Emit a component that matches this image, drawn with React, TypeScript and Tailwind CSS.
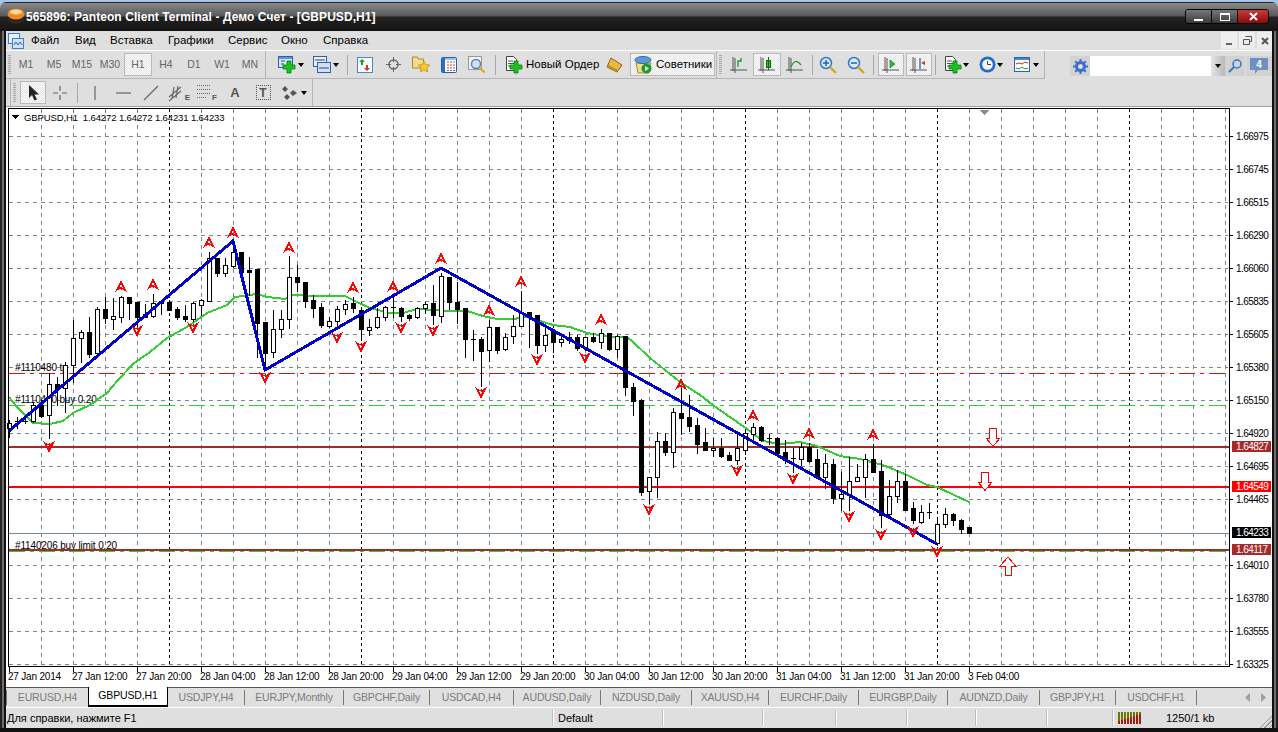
import React from 'react';

// [high, low, bodyTop, bodyBottom, bull] in page pixels, one bar every 8px from x=9
const bars: [number, number, number, number, number][] = [
  [420,437,423,428,1],[417,428,421,422,0],[415,423,421,421,0],[402,422,405,421,1],[402,417,405,416,0],[373,438,384,415,1],
  [377,405,384,389,0],[362,412,365,388,1],[320,382,338,365,1],[330,362,332,338,1],[317,357,332,354,0],[307,357,309,353,1],
  [297,323,309,318,0],[298,329,316,319,1],[296,322,297,317,1],[297,319,297,303,0],[302,327,302,317,0],[304,317,314,317,0],
  [294,317,303,316,1],[300,314,301,303,1],[300,310,302,310,0],[307,319,309,317,0],[305,321,316,319,0],[302,321,303,319,1],
  [299,315,300,305,1],[252,301,258,301,1],[258,276,258,273,0],[258,276,265,273,1],[241,267,252,266,1],[252,277,252,272,0],
  [257,295,270,272,0],[269,357,269,323,0],[322,370,322,353,0],[310,357,329,352,1],[310,337,319,329,1],[256,328,277,319,1],
  [265,291,277,282,0],[282,307,282,301,0],[295,317,300,308,0],[303,327,307,325,0],[317,327,321,326,1],[306,327,309,321,1],
  [300,314,304,309,1],[297,312,303,308,0],[307,340,310,329,0],[319,335,327,330,1],[308,328,317,327,1],[306,320,307,317,1],
  [295,317,307,308,0],[307,321,308,316,0],[314,320,315,318,0],[307,318,308,317,1],[302,313,304,308,1],[285,324,303,315,0],
  [273,322,276,316,1],[277,309,277,302,0],[282,323,302,309,0],[308,357,308,339,0],[330,360,339,340,0],[337,386,339,351,0],
  [320,361,327,350,1],[327,353,327,350,0],[333,350,337,349,1],[315,343,326,336,1],[291,326,312,326,1],[312,347,312,316,0],
  [315,353,315,345,0],[328,351,335,345,1],[330,352,330,342,0],[335,346,339,342,1],[332,343,337,340,1],[335,350,337,348,0],
  [337,350,337,348,1],[333,342,337,341,0],[329,348,333,342,1],[333,350,333,349,0],[335,357,336,349,1],[336,395,336,387,0],
  [383,415,387,401,0],[399,495,400,492,0],[477,503,477,491,1],[432,497,441,477,1],[433,455,441,452,0],[408,467,412,452,1],
  [385,434,413,418,0],[395,431,417,426,0],[418,453,425,444,0],[428,450,442,450,0],[438,456,448,450,1],[438,457,448,456,0],
  [452,460,455,460,0],[435,464,448,460,1],[430,454,433,450,1],[423,440,427,434,1],[426,441,427,440,0],[434,444,438,439,0],
  [437,453,438,453,0],[440,463,452,460,0],[448,472,458,459,0],[443,465,447,459,1],[443,462,447,461,0],[449,478,459,477,0],
  [454,488,463,477,1],[459,503,464,498,0],[472,510,494,498,1],[457,510,481,495,1],[464,481,477,481,1],[454,497,459,477,1],
  [444,472,459,472,0],[460,527,471,515,0],[480,515,496,514,1],[470,502,481,496,1],[474,510,481,510,0],[502,523,508,520,0],
  [505,523,512,522,1],[503,518,512,513,0],[517,545,524,543,1],[508,527,514,524,1],[513,525,514,520,0],[519,533,520,529,0],
  [527,533,527,533,0],
];

const ma = '9,397 17,407 25,415 33,423 50,424 63,421 73,413 90,405 107,393 118,380 133,364 150,352 167,338 187,327 207,313 227,305 235,297 257,294 267,297 285,299 292,295 320,296 345,296 357,302 370,308 390,313 403,313 417,309 453,311 467,311 483,316 497,319 513,319 527,317 553,325 570,327 587,333 610,337 627,337 633,342 650,358 680,382 700,395 717,408 747,429 763,441 780,444 800,442 817,446 840,456 860,459 883,465 907,475 927,485 937,487 969,502';

const upMarks = [[121,286],[153,284],[209,242],[233,232],[289,247],[353,287],[393,286],[441,258],[489,310],[521,281],[601,319],[681,384],[753,415],[809,433],[873,434]];
const downMarks = [[49,447],[137,331],[193,328],[265,378],[337,338],[361,347],[401,328],[433,331],[481,393],[537,360],[585,358],[649,510],[737,471],[793,479],[849,517],[881,535],[913,532],[937,552]];

const prices = [
  ['1.66975',136],['1.66745',169],['1.66515',202],['1.66290',235],['1.66060',268],['1.65835',301],['1.65605',334],['1.65380',367],
  ['1.65150',400],['1.64920',433],['1.64695',466],['1.64465',499],['1.64010',565],['1.63780',598],['1.63555',631],['1.63325',664],
] as [string, number][];

const times = ['27 Jan 2014','27 Jan 12:00','27 Jan 20:00','28 Jan 04:00','28 Jan 12:00','28 Jan 20:00','29 Jan 04:00','29 Jan 12:00','29 Jan 20:00','30 Jan 04:00','30 Jan 12:00','30 Jan 20:00','31 Jan 04:00','31 Jan 12:00','31 Jan 20:00','3 Feb 04:00'];

const priceTags = [['1.64827',447,'#a52a2a'],['1.64549',487,'#ff0000'],['1.64233',533,'#000000'],['1.64117',550,'#a52a2a']] as [string, number, string][];

const chartFont = '"Liberation Sans", Arial, sans-serif';

function Chart() {
  const vertical: number[] = [];
  for (let x = 41; x <= 1225; x += 32) vertical.push(x);
  return (
    <svg width={1266} height={579} viewBox="6 107 1266 579" className="block shrink-0" fontFamily={chartFont} shapeRendering="crispEdges">
      <rect x={6} y={107} width={1266} height={579} fill="#fff" />
      {vertical.map(x => {
        const major = (x - 169) % 192 === 0;
        return <line key={x} x1={x + 0.5} x2={x + 0.5} y1={109} y2={666} stroke={major ? '#000' : '#778899'} strokeDasharray={major ? '3 3' : '4 4'} />;
      })}
      {prices.map(([, y]) => (
        <line key={y} x1={9} x2={1228} y1={y + 0.5} y2={y + 0.5} stroke="#778899" strokeDasharray="4 4" />
      ))}
      <line x1={9} x2={1229} y1={533.5} y2={533.5} stroke="#778899" />
      <line x1={9} x2={1229} y1={373.5} y2={373.5} stroke="#e01010" strokeDasharray="16 5 4 5" />
      <line x1={9} x2={1229} y1={405.5} y2={405.5} stroke="#32cd32" strokeDasharray="16 5 4 5" />
      <line x1={9} x2={1229} y1={551.5} y2={551.5} stroke="#32cd32" strokeDasharray="16 5 4 5" />

      <text x={15} y={371} fontSize={10} letterSpacing={-0.15} fill="#000">#1110480 tp</text>
      <text x={15} y={403} fontSize={10} letterSpacing={-0.15} fill="#000">#1110410 buy 0.20</text>
      <text x={15} y={549} fontSize={10} letterSpacing={-0.15} fill="#000">#1140206 buy limit 0.20</text>

      <rect x={9} y={446} width={1220} height={2} fill="#a52a2a" />
      <rect x={9} y={486} width={1220} height={2} fill="#ff0000" />
      <rect x={9} y={549} width={1220} height={2} fill="#a52a2a" />

      <polyline points={ma} fill="none" stroke="#32cd32" strokeWidth={2} />
      {bars.map(([hi, lo, top, bottom, bull], i) => {
        const x = 9 + i * 8;
        return (
          <g key={x}>
            <line x1={x + 0.5} x2={x + 0.5} y1={hi} y2={lo + 1} stroke="#000" />
            {bottom - top < 2 ? (
              <rect x={x - 2} y={top} width={5} height={Math.max(bottom - top, 1)} fill="#000" />
            ) : (
              <rect x={x - 1.5} y={top + 0.5} width={4} height={bottom - top} fill={bull ? '#fff' : '#000'} stroke="#000" />
            )}
          </g>
        );
      })}
      <polyline points="9,431 233,241 265,370 441,268 937,544" fill="none" stroke="#0000cd" strokeWidth={3} />

      {upMarks.map(([x, y]) => (
        <path key={x} d={`M${x - 6} ${y + 6}L${x} ${y - 6}L${x + 6} ${y + 6}L${x + 1} ${y + 3}L${x} ${y + 4}L${x - 1} ${y + 3}ZM${x - 1} ${y + 1}L${x} ${y - 2}L${x + 2} ${y + 2}Z`} fill="#ff0000" fillRule="evenodd" />
      ))}
      {downMarks.map(([x, y]) => (
        <path key={x} d={`M${x - 6} ${y - 6}L${x} ${y + 6}L${x + 6} ${y - 6}L${x + 1} ${y - 3}L${x} ${y - 4}L${x - 1} ${y - 3}ZM${x - 2} ${y - 2}L${x} ${y + 2}L${x + 1} ${y - 1}Z`} fill="#ff0000" fillRule="evenodd" />
      ))}

      <path d="M989.5 428.5h7v9.5h3.5l-7 8.5-7-8.5h3.5z" fill="#fff" stroke="#ff0000" />
      <path d="M981.5 472.5h7v9.5h3.5l-7 8.5-7-8.5h3.5z" fill="#fff" stroke="#ff0000" />
      <path d="M1005 575.5h6.5v-9.5h4l-7.5-9-8 9h5z" fill="#fff" stroke="#ff0000" />

      <path d="M979 110h10l-5 5z" fill="#8a8a8a" />
      <path d="M12 115h7l-3.5 4z" fill="#000" />
      <text x={24} y={121} fontSize={9.5} letterSpacing={-0.12} fill="#000">GBPUSD,H1&#160; 1.64272 1.64272 1.64231 1.64233</text>

      {/* plot frame */}
      <rect x={8.5} y={108.5} width={1221} height={558} fill="none" stroke="#000" />

      {/* price scale */}
      {prices.map(([label, y]) => (
        <g key={label}>
          <line x1={1229} x2={1233} y1={y + 0.5} y2={y + 0.5} stroke="#000" />
          <text x={1236} y={y + 4} fontSize={10} letterSpacing={-0.55} fill="#000">{label}</text>
        </g>
      ))}
      {priceTags.map(([label, y, color]) => (
        <g key={label}>
          <rect x={1232} y={y - 6} width={39} height={11} fill={color} />
          <text x={1236} y={y + 3} fontSize={10} letterSpacing={-0.55} fill="#fff">{label}</text>
        </g>
      ))}

      {/* time scale */}
      {times.map((t, i) => (
        <g key={t}>
          <line x1={9.5 + i * 64} x2={9.5 + i * 64} y1={666} y2={672} stroke="#000" />
          <text x={8 + i * 64} y={680} fontSize={10} letterSpacing={-0.2} fill="#000">{t}</text>
        </g>
      ))}
    </svg>
  );
}

const Dither = 'border border-[#b9b9b9] bg-[repeating-conic-gradient(#ffffff_0_25%,#e2e2e2_0_50%)] bg-[length:2px_2px]';

function Caret({ className = '' }: { className?: string }) {
  return (
    <svg width={6} height={4} viewBox="0 0 6 4" className={`shrink-0 ${className}`}>
      <path d="M0 0h6L3 4z" fill="#000" />
    </svg>
  );
}

function Grip() {
  return <div className="h-[20px] w-[3px] shrink-0 bg-[repeating-linear-gradient(180deg,#a8a8a8_0_1px,transparent_1px_2px)]" />;
}

function Sep({ className = '' }: { className?: string }) {
  return <div className={`mx-[3px] h-[20px] w-px shrink-0 bg-[#a8a8a8] ${className}`} />;
}

function Btn({ children, active, w = 'w-[28px]' }: { children: React.ReactNode; active?: boolean; w?: string }) {
  return (
    <div className={`flex h-[23px] shrink-0 items-center justify-center ${w} ${active ? Dither : ''}`}>
      {children}
    </div>
  );
}

const GreenPlus = ({ x, y }: { x: number; y: number }) => (
  <path d={`M${x + 4} ${y}h4v4h4v4h-4v4h-4v-4h-4v-4h4z`} fill="#19c21f" stroke="#0b7d10" strokeWidth={0.8} />
);

const AxisBars = ({ children }: { children?: React.ReactNode }) => (
  <svg width={18} height={18} viewBox="0 0 18 18" fill="none">
    <path d="M3 1v14M0 14h17M5 2v15" stroke="#555" />
    {children}
  </svg>
);

function ChartPlusIcon() {
  return (
    <svg width={18} height={18} viewBox="0 0 18 18" className="shrink-0">
      <rect x={0.5} y={0.5} width={14} height={11} fill="#d8e8fa" stroke="#2a63b0" />
      <rect x={1} y={1} width={13} height={2} fill="#5c93d8" />
      <path d="M3 5h4M3 8h3" stroke="#444" />
      <GreenPlus x={5} y={5} />
    </svg>
  );
}

function ProfilesIcon() {
  return (
    <svg width={18} height={18} viewBox="0 0 18 18" className="shrink-0">
      <rect x={0.5} y={0.5} width={13} height={10} fill="#e6effa" stroke="#2a63b0" />
      <rect x={4.5} y={6.5} width={13} height={10} fill="#cfe0f6" stroke="#2a63b0" />
      <path d="M2 4h10M6 12h10" stroke="#444" />
    </svg>
  );
}

function MarketIcon() {
  return (
    <svg width={16} height={16} viewBox="0 0 16 16">
      <rect x={0.5} y={0.5} width={15} height={15} fill="#fbfdff" stroke="#4a85cc" />
      <path d="M5 2l3 3H6v3H4V5H2z" fill="#1a9a1f" />
      <path d="M10 14l3-3h-2V8H9v3H7z" fill="#d8321f" />
    </svg>
  );
}

function CrosshairIcon() {
  return (
    <svg width={15} height={15} viewBox="0 0 15 15" fill="none" stroke="#666">
      <circle cx={7.5} cy={7.5} r={4.5} strokeWidth={1.4} />
      <path d="M7.5 0v5M7.5 10v5M0 7.5h5M10 7.5h5" />
    </svg>
  );
}

function FavoriteIcon() {
  return (
    <svg width={18} height={17} viewBox="0 0 18 17">
      <path d="M0.5 1h5l1 2h5v9h-11z" fill="#f6dc8c" stroke="#a98b2c" />
      <path d="M12 5l1.8 3.6 4 .5-2.9 2.7.8 4L12 14l-3.6 1.8.7-4-2.9-2.7 4-.5z" fill="#f7c92e" stroke="#b98a0c" strokeWidth={0.7} />
    </svg>
  );
}

function NavigatorIcon() {
  return (
    <svg width={16} height={16} viewBox="0 0 16 16">
      <rect x={0.5} y={0.5} width={15} height={15} rx={1} fill="#fff" stroke="#1f5fb0" />
      <rect x={1} y={1} width={3} height={14} fill="#2a72c8" />
      <rect x={4} y={1} width={11} height={2} fill="#9cc0ec" />
      <path d="M6 5h8M6 8h8M6 11h8M6 13.5h8" stroke="#c04a3a" strokeDasharray="2 1" />
    </svg>
  );
}

function TesterIcon() {
  return (
    <svg width={18} height={18} viewBox="0 0 18 18" fill="none">
      <rect x={0.5} y={0.5} width={13} height={13} fill="#eef3fa" stroke="#999" />
      <circle cx={8} cy={8} r={4.5} fill="#cfe2f7" stroke="#5a7ea8" strokeWidth={1.4} />
      <path d="M11.5 11.5l5 5" stroke="#d9a520" strokeWidth={2} />
    </svg>
  );
}

function NewOrderIcon() {
  return (
    <svg width={18} height={18} viewBox="0 0 18 18" className="shrink-0">
      <path d="M1.5 .5h7l3 3v11h-10z" fill="#fff" stroke="#444" />
      <path d="M3 5h5M3 7.5h6M3 10h4" stroke="#555" />
      <GreenPlus x={5} y={5} />
    </svg>
  );
}

function GoldIcon() {
  return (
    <svg width={17} height={16} viewBox="0 0 17 16" className="shrink-0">
      <path d="M5 1l11 7-5 7-10-5z" fill="#e8b94a" stroke="#8a6414" />
      <path d="M1 10l10 5 1-2-10-5z" fill="#b88a26" />
    </svg>
  );
}

function ExpertIcon() {
  return (
    <svg width={19} height={20} viewBox="0 0 19 20" className="shrink-0">
      <path d="M2 8l15 0-2 10H4z" fill="#f3dc8a" stroke="#a98b2c" />
      <ellipse cx={9} cy={5} rx={8} ry={3.5} fill="#5d9ad8" stroke="#2d6aa8" />
      <circle cx={12.5} cy={13.5} r={5} fill="#1f9a2f" />
      <path d="M11 11l4 2.5-4 2.5z" fill="#fff" />
    </svg>
  );
}

const ZoomIcon = ({ plus }: { plus?: boolean }) => (
  <svg width={18} height={18} viewBox="0 0 18 18" fill="none">
    <circle cx={7} cy={7} r={5.5} fill="#d7e9fb" stroke="#2f77c9" strokeWidth={1.5} />
    <path d="M4 7h6" stroke="#1f5fb0" strokeWidth={1.5} />
    {plus && <path d="M7 4v6" stroke="#1f5fb0" strokeWidth={1.5} />}
    <path d="M11 11l6 6" stroke="#d9a520" strokeWidth={2.4} />
  </svg>
);

function ClockIcon() {
  return (
    <svg width={17} height={17} viewBox="0 0 17 17" className="shrink-0">
      <circle cx={8.5} cy={8.5} r={8} fill="#1f6fc9" />
      <circle cx={8.5} cy={8.5} r={5.3} fill="#f4f8fd" />
      <path d="M8.5 5v3.5H12" fill="none" stroke="#444" />
    </svg>
  );
}

function TemplateIcon() {
  return (
    <svg width={16} height={15} viewBox="0 0 16 15" className="shrink-0">
      <rect x={0.5} y={0.5} width={15} height={14} fill="#fff" stroke="#2a63b0" />
      <rect x={1} y={1} width={14} height={2} fill="#4a85cc" />
      <path d="M2 7l3-1 3 1 3-2 3 1" fill="none" stroke="#c0392b" />
      <path d="M2 11l3 1 3-2 3 2 3-1" fill="none" stroke="#2a9a2f" />
    </svg>
  );
}

function GearIcon() {
  return (
    <svg width={15} height={15} viewBox="0 0 15 15" fill="none">
      <circle cx={7.5} cy={7.5} r={4} stroke="#3a6fd0" strokeWidth={3} />
      <path d="M7.5 0v15M0 7.5h15M2.2 2.2l10.6 10.6M12.8 2.2L2.2 12.8" stroke="#3a6fd0" strokeWidth={2} strokeDasharray="3 9 3 0" />
      <circle cx={7.5} cy={7.5} r={1.5} fill="#dfe9f8" />
    </svg>
  );
}

const Stroke = ({ d }: { d: string }) => (
  <svg width={20} height={20} viewBox="0 0 20 20" fill="none">
    <path d={d} stroke="#666" strokeWidth={1.2} />
  </svg>
);

const timeframes = ['M1', 'M5', 'M15', 'M30', 'H1', 'H4', 'D1', 'W1', 'MN'];

const tabs: [string, string][] = [
  ['EURUSD,H4', 'w-[82px]'], ['GBPUSD,H1', 'w-[80px]'], ['USDJPY,H4', 'w-[77px]'], ['EURJPY,Monthly', 'w-[99px]'],
  ['GBPCHF,Daily', 'w-[86px]'], ['USDCAD,H4', 'w-[84px]'], ['AUDUSD,Daily', 'w-[87px]'], ['NZDUSD,Daily', 'w-[91px]'],
  ['XAUUSD,H4', 'w-[77px]'], ['EURCHF,Daily', 'w-[90px]'], ['EURGBP,Daily', 'w-[89px]'], ['AUDNZD,Daily', 'w-[92px]'],
  ['GBPJPY,H1', 'w-[76px]'], ['USDCHF,H1', 'w-[81px]'],
];

const statusCells = ['w-[110px]', 'w-[100px]', 'w-[73px]', 'w-[71px]', 'w-[69px]', 'w-[71px]', 'w-[66px]'];

const signalBars = [0, 1, 2, 3, 4, 5, 6, 7];

export default function App() {
  return (
    <div className="flex h-[732px] w-[1278px] flex-col overflow-hidden bg-[#a9c3e6] font-['Liberation_Sans',Arial,sans-serif] text-[11px] text-black">
      {/* title bar */}
      <div className="mt-[2px] flex h-[29px] shrink-0 items-center rounded-t-[6px] bg-[linear-gradient(180deg,#222_0,#222_1px,#8a8a8a_1px,#585858_14px,#222_15px,#151515_100%)] pl-[7px] pr-[9px]">
        <svg width={18} height={18} viewBox="0 0 18 18" className="shrink-0">
          <ellipse cx={9} cy={6} rx={8.5} ry={5.5} fill="#f08a24" />
          <ellipse cx={9} cy={4} rx={6} ry={2.5} fill="#fbd79a" />
          <path d="M1 9c2 6 14 6 16 0v3c-2 5-14 5-16 0z" fill="#3a2a10" />
        </svg>
        <span className="ml-[1px] text-[12px] font-bold tracking-[0.07px] text-white">565896: Panteon Client Terminal - Демо Счет - [GBPUSD,H1]</span>
        <div className="ml-auto flex h-[15px] overflow-hidden rounded-[3px] border border-black">
          <div className="flex w-[26px] items-end justify-center border-r border-black bg-[linear-gradient(180deg,#777,#3a3a3a)] pb-[2px]">
            <div className="h-[2px] w-[9px] bg-white" />
          </div>
          <div className="flex w-[26px] items-center justify-center border-r border-black bg-[linear-gradient(180deg,#777,#3a3a3a)]">
            <div className="h-[8px] w-[10px] border border-t-2 border-white" />
          </div>
          <div className="flex w-[30px] items-center justify-center bg-[linear-gradient(180deg,#c93a3a,#8a0c0c)]">
            <svg width={9} height={9} viewBox="0 0 9 9"><path d="M1 1l7 7M8 1l-7 7" stroke="#fff" strokeWidth={2} /></svg>
          </div>
        </div>
      </div>

      <div className="flex min-h-0 flex-1">
        <div className="w-[6px] shrink-0 bg-[linear-gradient(90deg,#222_0,#222_2px,#6e6e6e_2px,#6e6e6e_4px,#111_4px)]" />
        <div className="flex w-[1266px] flex-col bg-[#dfdfdf]">
          {/* menu */}
          <div className="flex h-[19px] shrink-0 items-center pt-[1px] text-[11.5px]">
            <svg width={16} height={16} viewBox="0 0 16 16" className="ml-[2px] shrink-0">
              <rect x={0.5} y={0.5} width={11} height={10} fill="#e8f1fb" stroke="#3f7cc9" />
              <rect x={4.5} y={5.5} width={11} height={10} fill="#cfe2f7" stroke="#3f7cc9" />
              <path d="M6 12l2-3 2 3 2-3 2 3" fill="none" stroke="#2a63b0" />
            </svg>
            <div className="ml-[7px] flex">
              <span className="w-[44px]">Файл</span>
              <span className="w-[35px]">Вид</span>
              <span className="w-[58px]">Вставка</span>
              <span className="w-[60px]">Графики</span>
              <span className="w-[53px]">Сервис</span>
              <span className="w-[42px]">Окно</span>
              <span>Справка</span>
            </div>
            <div className="ml-auto mr-[-1px] flex gap-[2px] self-start">
              <div className="flex h-[17px] w-[16px] items-end justify-center bg-[#eeeeee] pb-[4px]"><div className="h-[2px] w-[6px] bg-[#666]" /></div>
              <div className="flex h-[17px] w-[16px] items-center justify-center bg-[#eeeeee]">
                <svg width={9} height={9} viewBox="0 0 9 9" fill="none" stroke="#555"><path d="M2.5.5h6v5h-2M.5 3.5h6v5h-6z" /></svg>
              </div>
              <div className="flex h-[17px] w-[16px] items-center justify-center bg-[#eeeeee]">
                <svg width={8} height={8} viewBox="0 0 8 8"><path d="M1 1l6 6M7 1L1 7" stroke="#555" strokeWidth={2} /></svg>
              </div>
            </div>
          </div>

          {/* toolbar row 1 */}
          <div className="flex h-[29px] shrink-0 items-start border-t border-white">
            <div className="flex h-[28px] w-[260px] items-center border-b border-r border-[#b5b5b5] pl-[2px] text-[10.5px] text-[#666]">
              <Grip />
              <div className="ml-[1px] flex items-center">
                {timeframes.map(t => (
                  <Btn key={t} active={t === 'H1'}>{t}</Btn>
                ))}
              </div>
            </div>
            <div className="flex h-[28px] w-[451px] items-center border-b border-r border-[#b5b5b5] pl-[12px]">
              <ChartPlusIcon />
              <Caret className="ml-[2px]" />
              <div className="ml-[9px]"><ProfilesIcon /></div>
              <Caret className="ml-[2px]" />
              <Sep className="ml-[8px]" />
              <Btn><MarketIcon /></Btn>
              <Btn><CrosshairIcon /></Btn>
              <Btn><FavoriteIcon /></Btn>
              <Btn><NavigatorIcon /></Btn>
              <Btn><TesterIcon /></Btn>
              <Sep className="ml-[4px]" />
              <div className="ml-[6px] flex items-center">
                <NewOrderIcon />
                <span className="ml-[3px] w-[70px] whitespace-nowrap text-[11.5px]">Новый Ордер</span>
              </div>
              <div className="ml-[10px]"><GoldIcon /></div>
              <div className={`ml-[7px] flex h-[23px] w-[85px] shrink-0 items-center pl-[3px] ${Dither}`}>
                <ExpertIcon />
                <span className="ml-[3px] whitespace-nowrap text-[11.5px]">Советники</span>
              </div>
            </div>
            <div className="flex h-[28px] w-[328px] items-center border-b border-r border-[#b5b5b5] pl-[2px]">
              <Grip />
              <div className="ml-[3px] flex items-center">
                <Btn><AxisBars><path d="M8 11V5h3V2" stroke="#1a9a1f" strokeWidth={1.3} /></AxisBars></Btn>
                <Btn active><AxisBars><rect x={8.5} y={4.5} width={4} height={7} fill="#2ac02f" stroke="#0d6d12" /><path d="M10.5 1v13" stroke="#0d6d12" /></AxisBars></Btn>
                <Btn><AxisBars><path d="M5 11c3-7 6-7 10-2" stroke="#1a9a1f" strokeWidth={1.2} /></AxisBars></Btn>
                <Sep />
                <div className="-ml-[2px]"><Btn><ZoomIcon plus /></Btn></div>
                <Btn><ZoomIcon /></Btn>
                <Sep />
                <div className="ml-[1px]"><Btn active w="w-[26px]"><AxisBars><path d="M8 4l5 4-5 4z" fill="#2ac02f" stroke="#0d6d12" strokeWidth={0.6} /></AxisBars></Btn></div>
                <div className="ml-[2px]"><Btn active w="w-[26px]"><AxisBars><path d="M10 2v11" stroke="#2a63b0" strokeWidth={1.3} /><path d="M11 7l4-2v4z" fill="#c0391b" /></AxisBars></Btn></div>
                <Sep />
                <div className="ml-[5px] flex items-center">
                  <NewOrderIcon />
                  <Caret className="ml-[1px]" />
                </div>
                <div className="ml-[10px] flex items-center">
                  <ClockIcon />
                  <Caret className="ml-[1px]" />
                </div>
                <div className="ml-[11px] flex items-center">
                  <TemplateIcon />
                  <Caret className="ml-[3px]" />
                </div>
              </div>
            </div>
            {/* search */}
            <div className="ml-[25px] mt-[5px] flex h-[20px] w-[202px] items-stretch">
              <div className="flex w-[20px] items-center justify-center bg-[#d2d2d2]"><GearIcon /></div>
              <div className="w-[121px] bg-white" />
              <div className="flex w-[14px] items-center justify-center bg-[linear-gradient(90deg,#e4e4e4,#b8b8b8)]"><Caret /></div>
              <div className="flex w-[20px] items-center justify-center bg-[#d2d2d2]">
                <svg width={14} height={14} viewBox="0 0 14 14" fill="none"><circle cx={9} cy={5} r={4} stroke="#2f77c9" strokeWidth={1.5} /><path d="M6 8l-5 5" stroke="#2f77c9" strokeWidth={2} /></svg>
              </div>
              <div className="ml-px flex w-[26px] items-center justify-center bg-[#d2d2d2]">
                <svg width={20} height={18} viewBox="0 0 20 18">
                  <path d="M1 1h18v12H9l-3 4v-4H1z" fill="#6f8fc0" />
                  <text x={10} y={11} textAnchor="middle" fontSize={10} fontWeight={700} fill="#fff">4</text>
                </svg>
              </div>
            </div>
          </div>

          {/* toolbar row 2 */}
          <div className="flex h-[28px] shrink-0 items-start border-b border-[#a0a0a0] pl-[4px]">
            <div className="flex h-[27px] w-[303px] items-center border-l border-r border-[#b5b5b5] pl-[2px]">
              <Grip />
              <div className="ml-[4px] flex items-center">
                <Btn active w="w-[26px]">
                  <svg width={12} height={16} viewBox="0 0 12 16"><path d="M2 0v13l3-3 2.5 5.5 2.5-1L7.5 9.5H12z" fill="#222" /></svg>
                </Btn>
                <Btn><Stroke d="M10 3v5M10 12v5M3 10h5M12 10h5" /></Btn>
                <Sep />
                <Btn><Stroke d="M10 3v14" /></Btn>
                <Btn><Stroke d="M3 10h15" /></Btn>
                <Btn><Stroke d="M3 17L17 3" /></Btn>
                <Btn>
                  <div className="relative h-[20px] w-[22px]">
                    <Stroke d="M1 14L13 4M1 18L13 8M6 4l-2 12M10 3l-2 12" />
                    <span className="absolute bottom-[1px] right-0 text-[8px] font-bold leading-none text-[#555]">E</span>
                  </div>
                </Btn>
                <Btn>
                  <div className="relative h-[20px] w-[22px]">
                    <svg width={16} height={18} viewBox="0 0 16 18" fill="none" stroke="#666" strokeDasharray="1 1"><path d="M1 2.5h14M1 6.5h14M1 10.5h14M1 14.5h10" /></svg>
                    <span className="absolute bottom-[1px] right-[1px] text-[8px] font-bold leading-none text-[#555]">F</span>
                  </div>
                </Btn>
                <Btn><span className="text-[13px] font-bold text-[#555]">A</span></Btn>
                <Btn>
                  <div className="flex h-[15px] w-[15px] items-center justify-center border border-dotted border-[#555] text-[12px] font-bold leading-none text-[#555]">T</div>
                </Btn>
                <div className="ml-[5px] flex items-center">
                  <svg width={16} height={16} viewBox="0 0 16 16"><path d="M3 1l3 3-3 3L0 4zM11 5l4 3-4 3-3-3zM5 9l3 3-3 3-3-3z" fill="#555" /></svg>
                  <Caret className="ml-[3px]" />
                </div>
              </div>
            </div>
          </div>

          {/* chart */}
          <Chart />

          {/* tabs */}
          <div className="h-[22px] shrink-0 border-y border-white">
            <div className="flex h-[20px] items-stretch border-t border-[#555] bg-[#e0e0e0] text-[10.5px] tracking-[-0.15px] text-[#7c7c7c]">
              {tabs.map(([t, w], i) => (
                i === 1 ? (
                  <div key={t} className={`${w} -mt-px flex items-center justify-center border-x border-b-2 border-black bg-white text-black`}>{t}</div>
                ) : (
                  <div key={t} className={`${w} my-[2px] flex items-center justify-center ${i === 0 ? 'border-l' : ''} ${i > 1 ? 'border-r' : ''} border-[#7b7b6b]`}>{t}</div>
                )
              ))}
              <div className="ml-auto flex items-center gap-[11px] pr-[6px]">
                <svg width={5} height={9} viewBox="0 0 5 9"><path d="M5 0v9L0 4.5z" fill="#a0a0a0" /></svg>
                <svg width={5} height={9} viewBox="0 0 5 9"><path d="M0 0v9l5-4.5z" fill="#a0a0a0" /></svg>
              </div>
            </div>
          </div>

          {/* status bar */}
          <div className="relative flex min-h-0 flex-1 items-center text-[11px]">
            <div className="flex h-[16px] w-[547px] items-center border-r border-[#bdbdbd] pl-[1px] shadow-[1px_0_0_#fff]">Для справки, нажмите F1</div>
            {statusCells.map((w, i) => (
              <div key={w + i} className={`flex h-[16px] items-center border-r border-[#bdbdbd] pl-[5px] shadow-[1px_0_0_#fff] ${w}`}>{i === 0 ? 'Default' : ''}</div>
            ))}
            <svg width={24} height={12} viewBox="0 0 24 12" className="ml-[5px] shrink-0">
              {signalBars.map(i => (
                <g key={i}>
                  <rect x={i * 3} y={0} width={2} height={9 - i} fill="#6b7a00" />
                  <rect x={i * 3} y={9 - i} width={2} height={3 + i} fill="#a51c0c" />
                </g>
              ))}
            </svg>
            <span className="ml-[24px]">1250/1 kb</span>
            <div className="absolute bottom-0 right-0 h-[14px] w-[14px] bg-[repeating-linear-gradient(135deg,transparent_0_2px,#999_2px_3px)] [clip-path:polygon(100%_0,100%_100%,0_100%)]" />
          </div>
        </div>
        <div className="w-[6px] shrink-0 bg-[linear-gradient(90deg,#111_0,#111_2px,#6e6e6e_2px,#6e6e6e_4px,#222_4px)]" />
      </div>
      <div className="h-[4px] shrink-0 bg-[#111]" />
    </div>
  );
}
